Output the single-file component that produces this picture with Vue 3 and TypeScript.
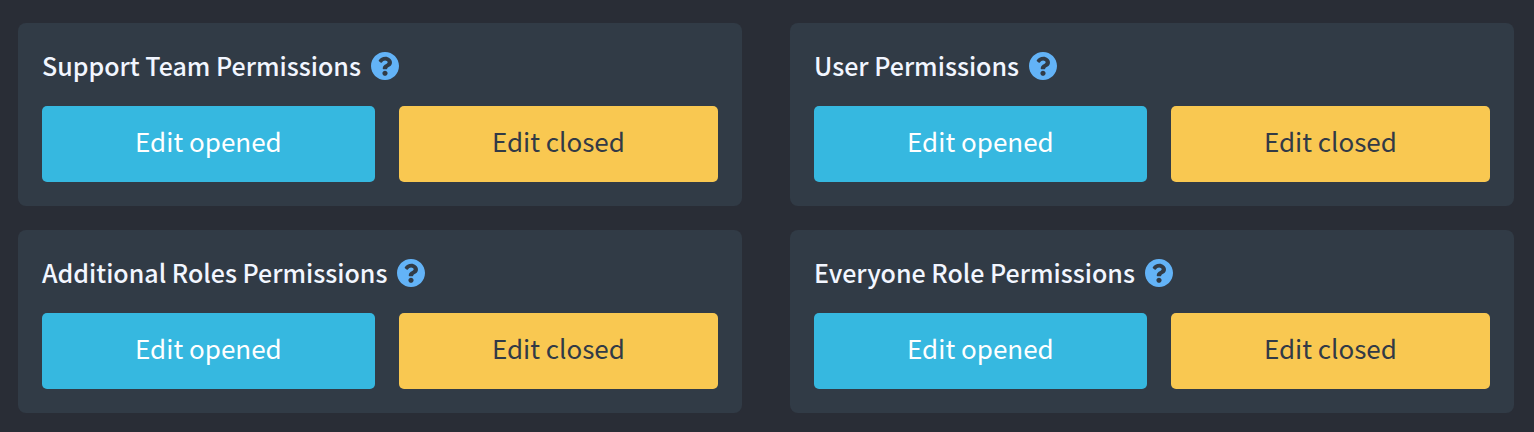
<script setup lang="ts">
interface PermissionGroup {
  id: string
  title: string
}

const groups: PermissionGroup[] = [
  { id: 'support-team', title: 'Support Team Permissions' },
  { id: 'user', title: 'User Permissions' },
  { id: 'additional-roles', title: 'Additional Roles Permissions' },
  { id: 'everyone-role', title: 'Everyone Role Permissions' },
]
</script>

<template>
  <main class="permissions">
    <section v-for="group in groups" :key="group.id" class="card" :aria-labelledby="group.id">
      <header class="heading">
        <h2 :id="group.id" class="title">{{ group.title }}</h2>
        <button type="button" class="help" :aria-describedby="group.id" aria-label="Help">
          <svg class="help-icon" viewBox="8 8 496 496" aria-hidden="true">
            <path
              fill="currentColor"
              d="M504 256c0 136.997-111.043 248-248 248S8 392.997 8 256C8 119.083 119.043 8 256 8s248 111.083 248 248zM262.655 90c-54.497 0-89.255 22.957-116.549 63.758-3.536 5.286-2.353 12.415 2.715 16.258l34.699 26.31c5.205 3.947 12.621 3.008 16.665-2.122 17.864-22.658 30.113-35.797 57.303-35.797 20.429 0 45.698 13.148 45.698 32.958 0 14.976-12.363 22.667-32.534 33.976C247.128 238.528 216 254.941 216 296v4c0 6.627 5.373 12 12 12h56c6.627 0 12-5.373 12-12v-1.333c0-28.462 83.186-29.647 83.186-106.667 0-58.002-60.165-102-116.531-102zM256 338c-25.365 0-46 20.635-46 46 0 25.364 20.635 46 46 46s46-20.636 46-46c0-25.365-20.635-46-46-46z"
            />
          </svg>
        </button>
      </header>
      <div class="actions">
        <button type="button" class="action opened">Edit opened</button>
        <button type="button" class="action closed">Edit closed</button>
      </div>
    </section>
  </main>
</template>

<style>
body {
  background: #292d36;
}
</style>

<style scoped>
.permissions {
  display: grid;
  grid-template-columns: repeat(2, minmax(0, 1fr));
  gap: 24px 48px;
  padding: 23px 20px 18px 18px;
  font-family: "Noto Sans CJK JP", "Noto Sans", sans-serif;
  font-size: 26px;
}

.card {
  padding: 24px;
  border-radius: 8px;
  background: #313b46;
}

.heading {
  display: flex;
  align-items: center;
  gap: 10px;
  margin-bottom: 21px;
}

.title {
  margin: 0;
  padding-bottom: 2px;
  color: #f2f6ff;
  font-size: 25px;
  font-weight: 500;
  line-height: 36px;
}

.help {
  display: flex;
  padding: 0;
  border: 0;
  background: none;
  color: #63b3f7;
  cursor: pointer;
}

.help-icon {
  width: 28px;
  height: 28px;
}

.actions {
  display: flex;
  gap: 24px;
}

.action {
  flex: 1 1 auto;
  padding: 15px 24px 21px;
  border: 0;
  border-radius: 5px;
  font-family: inherit;
  font-size: 26px;
  line-height: 40px;
  cursor: pointer;
}

.opened {
  background: #36b8e0;
  color: #ffffff;
}

.closed {
  background: #f9c851;
  color: #323a46;
}
</style>
